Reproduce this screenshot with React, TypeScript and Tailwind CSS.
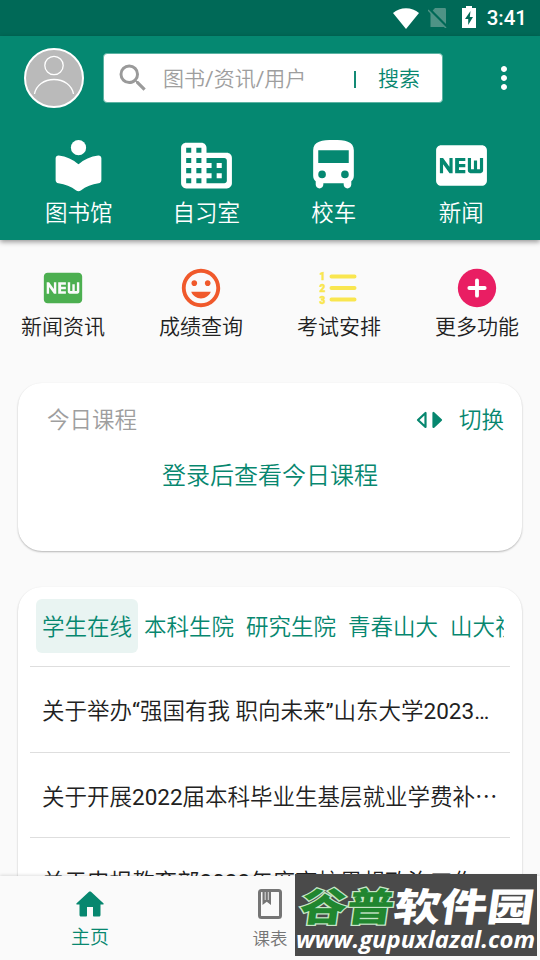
import React from 'react';
import { MdFiberNew, MdInsertEmoticon, MdMoreVert, MdSearch } from 'react-icons/md';

const LibraryIcon = () => (
  <svg viewBox="0 0 24 24" className="h-[61px] w-[61px]" fill="currentColor">
    <circle cx="12" cy="5" r="3" />
    <path d="M12 11.55C9.9 9.6 7.2 8.35 4.2 8.03 3.5 8 3 8.5 3 9.15v8.7c0 .6.45 1.1 1.1 1.16 2.6.3 5 1.3 7 2.85.55.4 1.25.4 1.8 0 2-1.5 4.4-2.55 7-2.85.65-.06 1.1-.56 1.1-1.16v-8.7c0-.65-.5-1.15-1.2-1.12-3 .32-5.7 1.57-7.8 3.52z" />
  </svg>
);

const BuildingIcon = () => (
  <svg viewBox="0 0 24 24" className="h-[61px] w-[61px]" fill="currentColor" fillRule="evenodd">
    <path d="M12 7V5c0-1.1-.9-2-2-2H4c-1.1 0-2 .9-2 2v14c0 1.1.9 2 2 2h16c1.1 0 2-.9 2-2V9c0-1.1-.9-2-2-2h-8zM4 5h2v2H4zM8 5h2v2H8zM4 9h2v2H4zM8 9h2v2H8zM4 13h2v2H4zM8 13h2v2H8zM4 17h2v2H4zM8 17h2v2H8zM12 9h7c.55 0 1 .45 1 1v8c0 .55-.45 1-1 1h-7v-2h2v-2h-2v-2h2v-2h-2zM16 11h2v2h-2zM16 15h2v2h-2z" />
  </svg>
);

const BusIcon = () => (
  <svg viewBox="0 0 24 24" className="h-[61px] w-[61px]" fill="currentColor" fillRule="evenodd">
    <path d="M4 16c0 .88.39 1.67 1 2.22v1.28c0 .83.67 1.5 1.5 1.5S8 20.33 8 19.5V19h8v.5c0 .83.67 1.5 1.5 1.5s1.5-.67 1.5-1.5v-1.28c.61-.55 1-1.34 1-2.22V6c0-3.5-3.58-4-8-4s-8 .5-8 4v10zM7.5 17a1.5 1.5 0 1 1 0-3 1.5 1.5 0 0 1 0 3zM16.5 17a1.5 1.5 0 1 1 0-3 1.5 1.5 0 0 1 0 3zM18 11H6V6h12z" />
  </svg>
);

const NumberedListIcon = () => (
  <svg viewBox="0 0 46 46" className="h-[46px] w-[46px]" fill="currentColor">
    <g className="font-[Roboto] text-[10px] font-black" stroke="currentColor" strokeWidth=".5">
      <text x="3.500" y="15">1</text>
      <text x="3.500" y="27">2</text>
      <text x="3.500" y="38.500">3</text>
    </g>
    <path d="M15.500 11.500h23M15.500 23h23M15.500 34.500h23" stroke="currentColor" strokeWidth="4" strokeLinecap="round" />
  </svg>
);

const PlusIcon = () => (
  <svg viewBox="0 0 24 24" className="h-[46px] w-[46px]">
    <circle cx="12" cy="12" r="10" fill="currentColor" />
    <path d="M12 8v8M8 12h8" stroke="#fff" strokeWidth="2" strokeLinecap="round" />
  </svg>
);

const BatteryIcon = () => (
  <svg viewBox="0 0 14 22" className="h-[22px] w-[14px]" fillRule="evenodd" fill="currentColor">
    <path d="M4 0h6v2h4v20H0V2h4zM8.500 5 3 13h3.200v6L11 11H7.800z" />
  </svg>
);

const SwitchIcon = () => (
  <svg viewBox="0 0 28 18" className="h-[18px] w-[28px]" fill="none" stroke="#07876f" strokeWidth="2.200" strokeLinejoin="round">
    <path d="M9.500 2v14L2 9z" />
    <path d="M17.500 2v14l7.500-7z" fill="#07876f" />
  </svg>
);

const HomeIcon = () => (
  <svg viewBox="0 0 28 26" className="h-[26px] w-[28px]" fill="currentColor">
    <path d="M11 24.500V16h6v8.500c0 .6.4 1 1 1h5c1 0 1.500-.6 1.500-1.500V13.500h2.300c.9 0 1.200-.8.6-1.300L15 .8c-.6-.5-1.400-.5-2 0L.6 12.200c-.6.5-.3 1.300.6 1.300h2.300V24c0 .9.600 1.500 1.500 1.500h5c.6 0 1-.4 1-1z" />
  </svg>
);

const TimetableIcon = () => (
  <svg viewBox="0 0 24 30" className="h-[30px] w-[24px]">
    <rect x="1.500" y="1.500" width="21" height="27" rx="2" fill="none" stroke="currentColor" strokeWidth="3" />
    <path d="M4.500 2h8.500v14l-4.250-3.200L4.500 16z" fill="currentColor" />
    <path d="M7.200 3v8M10.300 3v8" stroke="#fafafa" strokeWidth=".8" />
  </svg>
);

const mainLinks = [
  { label: '图书馆', icon: <LibraryIcon /> },
  { label: '自习室', icon: <BuildingIcon /> },
  { label: '校车', icon: <BusIcon /> },
  { label: '新闻', icon: <MdFiberNew className="h-[61px] w-[61px]" /> },
];

const shortcuts = [
  { label: '新闻资讯', color: 'text-[#4caf50]', icon: <MdFiberNew className="h-[46px] w-[46px]" /> },
  { label: '成绩查询', color: 'text-[#f0592b]', icon: <MdInsertEmoticon className="h-[46px] w-[46px]" /> },
  { label: '考试安排', color: 'text-[#f9e64f]', icon: <NumberedListIcon /> },
  { label: '更多功能', color: 'text-[#e91e63]', icon: <PlusIcon /> },
];

const tabs = ['学生在线', '本科生院', '研究生院', '青春山大', '山大视点'];

const news = [
  '关于举办“强国有我 职向未来”山东大学2023…',
  '关于开展2022届本科毕业生基层就业学费补⋯',
  '关于申报教育部2022年度高校思想政治工作',
];

const App = () => {
  return (
    <div className="relative flex h-[960px] w-[540px] flex-col overflow-hidden bg-[#fafafa] font-[Roboto,'Noto_Sans_CJK_SC_DemiLight','Noto_Sans_CJK_SC',sans-serif] font-normal text-[#212121]">
      {/* Status bar */}
      <div className="flex h-9 shrink-0 items-center justify-end bg-[#006957] pr-[13px] text-white">
        <svg viewBox="0 0 26 21" className="h-[21px] w-[26px]" fill="currentColor">
          <path d="M13 21 0 5C7-1.300 19-1.300 26 5z" />
        </svg>
        <svg viewBox="0 0 20 20" className="ml-[9px] h-5 w-5">
          <path d="M7 0h9.500c1 0 1.500.5 1.500 1.500V19H2.500V5z" fill="#4f9386" />
          <path d="M0 0l20 20" stroke="#006957" strokeWidth="3" />
          <path d="M0 2l18 18" stroke="#4f9386" strokeWidth="1.500" />
        </svg>
        <span className="ml-[14px] mb-[2px]"><BatteryIcon /></span>
        <span className="ml-[11px] text-[20.500px] font-medium leading-9">3:41</span>
      </div>

      {/* Header */}
      <header className="z-10 flex h-[204px] shrink-0 flex-col bg-[#058871] text-white shadow-[0_2px_5px_rgba(0,0,0,0.4)]">
        <div className="flex h-[84px] items-center pl-6">
          <svg viewBox="0 0 60 60" className="h-[60px] w-[60px]" fill="none" stroke="#fff">
            <circle cx="30" cy="30" r="29" fill="#bababa" strokeWidth="2" />
            <circle cx="30" cy="17.500" r="9.200" strokeWidth="1.300" />
            <path d="M10.500 46c1.500-8.500 9.500-14.500 19.500-14.500S48 37.500 49.500 46" strokeWidth="1.300" />
          </svg>
          <div className="ml-[19px] flex h-[50px] w-[340px] items-center rounded border border-[#5cb3a3] bg-white">
            <MdSearch className="ml-[11px] h-[36px] w-[36px] text-[#9a9a9a]" />
            <span className="ml-[12px] w-[191px] pt-[3px] text-[21px] text-[#9e9e9e]">图书/资讯/用户</span>
            <span className="mt-[2px] h-[17px] w-[2px] bg-[#138a75]" />
            <span className="ml-[22px] pt-[3px] text-[21px] text-[#07876f]">搜索</span>
          </div>
          <MdMoreVert className="ml-[43px] h-9 w-9" />
        </div>
        <div className="flex px-[15px] pt-[15px]">
          {mainLinks.map((item) => (
            <div key={item.label} className="flex flex-1 flex-col items-center">
              {item.icon}
              <span className="text-[22.500px] leading-[34px]">{item.label}</span>
            </div>
          ))}
        </div>
      </header>

      {/* Shortcuts */}
      <div className="flex h-[143px] shrink-0 justify-between px-[21px] pt-[25px]">
        {shortcuts.map((item) => (
          <div key={item.label} className="flex flex-col items-center">
            <span className={item.color}>{item.icon}</span>
            <span className="text-[21px] leading-8">{item.label}</span>
          </div>
        ))}
      </div>

      {/* Today's classes */}
      <section className="mx-[18px] h-[168px] shrink-0 rounded-[24px] bg-white shadow-[0_1px_2px_rgba(0,0,0,0.28)]">
        <div className="flex h-[73px] items-center pl-[29px] pr-[18px] text-[22.500px]">
          <span className="pt-[3px] text-[#9e9e9e]">今日课程</span>
          <div className="ml-auto flex items-center text-[#07876f]">
            <SwitchIcon />
            <span className="ml-[15px] pt-[3px]">切换</span>
          </div>
        </div>
        <p className="text-center text-[24px] leading-10 text-[#07876f]">登录后查看今日课程</p>
      </section>

      {/* News */}
      <section className="mx-[18px] mt-9 h-[400px] shrink-0 rounded-[24px] bg-white px-3 pt-3 shadow-[0_1px_2px_rgba(0,0,0,0.28)]">
        <div className="mx-[6px] flex overflow-hidden text-[22.500px] text-[#07876f]">
          {tabs.map((tab, i) => (
            <span
              key={tab}
              className={`h-[54px] w-[102px] shrink-0 whitespace-nowrap rounded-md text-center leading-[56px] ${i === 0 ? 'bg-[#e9f4f2]' : ''}`}
            >
              {tab}
            </span>
          ))}
        </div>
        <div className="mt-[13px]">
          {news.map((title) => (
            <div key={title} className="h-[85.500px] whitespace-nowrap border-t border-[#dedede] pl-3 text-[22.500px] leading-[89px]">
              {title}
            </div>
          ))}
        </div>
      </section>

      {/* Bottom navigation */}
      <nav className="absolute inset-x-0 bottom-0 z-10 flex h-[84px] bg-[#fafafa] shadow-[0_-1px_3px_rgba(0,0,0,0.12)]">
        <div className="flex w-[180px] flex-col items-center pt-[15px] text-[#07876f]">
          <HomeIcon />
          <span className="mt-[5px] text-[19px] leading-8">主页</span>
        </div>
        <div className="flex w-[180px] flex-col items-center pt-[13px] text-[#757575]">
          <TimetableIcon />
          <span className="mt-[4px] text-[17.500px] leading-8">课表</span>
        </div>
      </nav>

      {/* Site banner */}
      <div className="absolute bottom-1 left-[295px] z-20 h-[82px] w-[242px] overflow-hidden bg-[#4a4a4a]">
        <svg viewBox="0 0 242 82" className="h-full w-full">
          <g className="font-['Noto_Sans_CJK_SC',sans-serif] text-[46px] font-black" transform="translate(0 49) skewX(-8) scale(1 0.84)">
            <text x="3" y="-2" textLength="94" lengthAdjust="spacingAndGlyphs" fill="#21862f" stroke="#c6e6c7" strokeWidth="3" paintOrder="stroke">谷普</text>
            <text x="97" y="-2" textLength="140" lengthAdjust="spacingAndGlyphs" fill="#fff">软件园</text>
          </g>
          <text x="1" y="74" textLength="239" lengthAdjust="spacingAndGlyphs" className="font-['Open_Sans',sans-serif] text-[24px] font-bold italic" fill="#fff">www.gupuxlazal.com</text>
        </svg>
      </div>
    </div>
  );
};

export default App;
